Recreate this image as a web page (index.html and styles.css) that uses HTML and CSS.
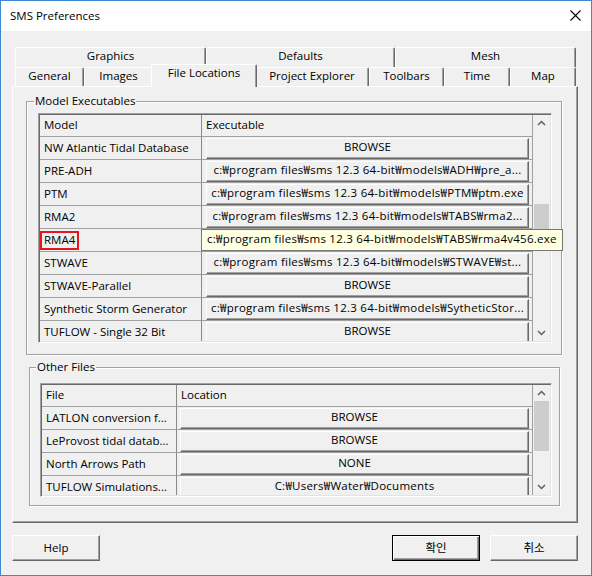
FILE: index.html
```html
<!DOCTYPE html>
<html lang="ko">
<head>
<meta charset="utf-8">
<title>SMS Preferences</title>
<link rel="stylesheet" href="styles.css">
</head>
<body>
<div class="window">
  <div class="titlebar">
    <span class="title">SMS Preferences</span>
    <svg class="close" width="11" height="11" viewBox="0 0 11 11"><path d="M0.5 0.5 L10.5 10.5 M10.5 0.5 L0.5 10.5" stroke="#000" stroke-width="1.1" fill="none"/></svg>
  </div>
  <div class="client">
    <div class="tabs">
      <div class="tabrow row1">
        <div class="tab t-graphics">Graphics</div>
        <div class="tab t-defaults">Defaults</div>
        <div class="tab t-mesh">Mesh</div>
      </div>
      <div class="tabrow row2">
        <div class="tab t-general">General</div>
        <div class="tab t-images">Images</div>
        <div class="tab t-files selected">File Locations</div>
        <div class="tab t-project">Project Explorer</div>
        <div class="tab t-toolbars">Toolbars</div>
        <div class="tab t-time">Time</div>
        <div class="tab t-map">Map</div>
      </div>
    </div>
    <div class="panel">
      <div class="group g1">
        <div class="glabel">Model Executables</div>
        <div class="table t1">
          <div class="grid">
            <div class="cell hdr c1">Model</div>
            <div class="cell hdr c2">Executable</div>

            <div class="cell c1">NW Atlantic Tidal Database</div>
            <div class="cell c2 bc"><div class="cbtn">BROWSE</div></div>

            <div class="cell c1">PRE-ADH</div>
            <div class="cell c2 bc"><div class="cbtn path">c:₩program files₩sms 12.3 64-bit₩models₩ADH₩pre_a...</div></div>

            <div class="cell c1">PTM</div>
            <div class="cell c2 bc"><div class="cbtn path">c:₩program files₩sms 12.3 64-bit₩models₩PTM₩ptm.exe</div></div>

            <div class="cell c1">RMA2</div>
            <div class="cell c2 bc"><div class="cbtn path">c:₩program files₩sms 12.3 64-bit₩models₩TABS₩rma2...</div></div>

            <div class="cell c1"><span class="hl">RMA4</span></div>
            <div class="cell c2 bc"></div>

            <div class="cell c1">STWAVE</div>
            <div class="cell c2 bc"><div class="cbtn path">c:₩program files₩sms 12.3 64-bit₩models₩STWAVE₩st...</div></div>

            <div class="cell c1">STWAVE-Parallel</div>
            <div class="cell c2 bc"><div class="cbtn">BROWSE</div></div>

            <div class="cell c1">Synthetic Storm Generator</div>
            <div class="cell c2 bc"><div class="cbtn path">c:₩program files₩sms 12.3 64-bit₩models₩SytheticStor...</div></div>

            <div class="cell c1">TUFLOW - Single 32 Bit</div>
            <div class="cell c2 bc"><div class="cbtn">BROWSE</div></div>
          </div>
          <div class="vscroll">
            <div class="arrow"><svg width="9" height="6" viewBox="0 0 9 6"><path d="M1 5 L4.5 1.5 L8 5" stroke="#606060" stroke-width="1.5" fill="none"/></svg></div>
            <div class="track"><div class="thumb thumb1"></div></div>
            <div class="arrow"><svg width="9" height="6" viewBox="0 0 9 6"><path d="M1 1 L4.5 4.5 L8 1" stroke="#606060" stroke-width="1.5" fill="none"/></svg></div>
          </div>
          <div class="tooltip path">c:₩program files₩sms 12.3 64-bit₩models₩TABS₩rma4v456.exe</div>
        </div>
      </div>

      <div class="group g2">
        <div class="glabel">Other Files</div>
        <div class="table t2">
          <div class="grid">
            <div class="cell hdr c1">File</div>
            <div class="cell hdr c2">Location</div>

            <div class="cell c1">LATLON conversion f...</div>
            <div class="cell c2 bc"><div class="cbtn">BROWSE</div></div>

            <div class="cell c1">LeProvost tidal datab...</div>
            <div class="cell c2 bc"><div class="cbtn">BROWSE</div></div>

            <div class="cell c1">North Arrows Path</div>
            <div class="cell c2 bc"><div class="cbtn">NONE</div></div>

            <div class="cell c1">TUFLOW Simulations...</div>
            <div class="cell c2 bc"><div class="cbtn path">C:₩Users₩Water₩Documents</div></div>
          </div>
          <div class="vscroll">
            <div class="arrow"><svg width="9" height="6" viewBox="0 0 9 6"><path d="M1 5 L4.5 1.5 L8 5" stroke="#606060" stroke-width="1.5" fill="none"/></svg></div>
            <div class="track"><div class="thumb thumb2"></div></div>
            <div class="arrow"><svg width="9" height="6" viewBox="0 0 9 6"><path d="M1 1 L4.5 4.5 L8 1" stroke="#606060" stroke-width="1.5" fill="none"/></svg></div>
          </div>
        </div>
      </div>
    </div>
    <div class="buttons">
      <div class="btn">Help</div>
      <div class="spacer"></div>
      <div class="btn default">확인</div>
      <div class="btn">취소</div>
    </div>
  </div>
</div>
</body>
</html>
```

FILE: styles.css
```css
* { box-sizing: border-box; }

body {
  margin: 0;
  background: #ffffff;
  font-family: "Open Sans", "Noto Sans CJK KR", sans-serif;
  font-size: 11.5px;
  color: #000;
}

.window {
  width: 592px;
  height: 576px;
  border: 1px solid #3e88d0;
  background: #f0f0f0;
  display: flex;
  flex-direction: column;
  overflow: hidden;
}

.titlebar {
  height: 30px;
  flex: none;
  background: #ffffff;
  display: flex;
  align-items: center;
  justify-content: space-between;
  padding: 0 10px 1px 9px;
}

.title { font-size: 11.5px; }

.close { display: block; }

.client {
  flex: 1;
  padding: 16px 0 0 11px;
}

/* ---------- tabs ---------- */
.tabrow {
  display: flex;
  margin-left: 3px;
}

.tab {
  background: #f0f0f0;
  border-top: 1px solid #ffffff;
  border-left: 1px solid #ffffff;
  border-right: 1px solid #696969;
  box-shadow: inset -1px 0 #a0a0a0;
  border-radius: 2px 2px 0 0;
  text-align: center;
  line-height: 16px;
  white-space: nowrap;
}

.row1 .tab { height: 20px; }
.row2 .tab { height: 19px; }

.tab.selected {
  position: relative;
  z-index: 1;
  height: 23px;
  margin: -3px -2px -1px;
}

.t-graphics { width: 191px; }
.t-defaults { width: 189px; }
.t-mesh { width: 181px; }

.t-general { width: 69px; }
.t-images { width: 69px; }
.t-files { width: 106px; }
.t-project { width: 114px; }
.t-toolbars { width: 75px; }
.t-time { width: 66px; }
.t-map { width: 66px; }

/* ---------- panel ---------- */
.panel {
  width: 566px;
  height: 437px;
  border-top: 1px solid #ffffff;
  border-left: 1px solid #ffffff;
  border-right: 1px solid #696969;
  border-bottom: 1px solid #696969;
  box-shadow: inset -1px -1px #a0a0a0;
  overflow: hidden;
}

.group {
  border: 1px solid #a0a0a0;
  box-shadow: inset 1px 1px #ffffff, 1px 1px #ffffff;
}

.g1 {
  margin: 14px 0 0 13px;
  width: 536px;
  height: 254px;
}

.g2 {
  margin: 12px 0 0 16px;
  width: 531px;
  height: 139px;
}

.glabel {
  display: table;
  background: #f0f0f0;
  line-height: 16px;
  padding: 0 1px;
  margin-top: -9px;
}

.g1 .glabel { margin-left: 7px; }
.g2 .glabel { margin-left: 6px; }

/* ---------- tables ---------- */
.table {
  position: relative;
  display: flex;
  border: 1px solid;
  border-color: #a0a0a0 #ffffff #ffffff #a0a0a0;
  box-shadow: inset 1px 1px #696969, inset -1px -1px #e3e3e3;
  padding: 1px;
  background: #f0f0f0;
}

.t1 {
  margin: 4px 0 0 11px;
  width: 514px;
  height: 230px;
}

.t2 {
  margin: 8px 0 0 10px;
  width: 512px;
  height: 114px;
}

.grid {
  display: grid;
  grid-template-rows: 22px;
  grid-auto-rows: 23px;
  align-content: start;
  overflow: hidden;
  flex: none;
}

.t1 .grid {
  grid-template-columns: 162px 331px;
  width: 493px;
  height: 226px;
}

.t2 .grid {
  grid-template-columns: 135px 356px;
  width: 491px;
  height: 110px;
}

.cell {
  border-bottom: 1px solid #a0a0a0;
  border-right: 1px solid #a0a0a0;
  display: flex;
  align-items: center;
  padding: 0 0 2px 4px;
  white-space: nowrap;
  overflow: hidden;
}

.cell.c1 { border-right-color: #8a8a8a; }

.cell.bc {
  align-items: stretch;
  padding: 1px 3px 0 4px;
}

.t2 .cell.bc { padding-left: 3px; }

.cbtn {
  flex: 1;
  min-width: 0;
  background: #f0f0f0;
  border-top: 1px solid #ffffff;
  border-left: 1px solid #ffffff;
  border-right: 1px solid #696969;
  border-bottom: 1px solid #696969;
  box-shadow: inset -1px -1px #a0a0a0;
  text-align: center;
  line-height: 16px;
  padding: 0 3px;
  white-space: nowrap;
  overflow: hidden;
}

.path { letter-spacing: 0.25px; }

.tooltip {
  position: absolute;
  left: 162px;
  top: 115px;
  width: 362px;
  height: 22px;
  z-index: 5;
  background: #ffffe1;
  border: 1px solid #767676;
  padding-left: 5px;
  line-height: 18px;
  white-space: nowrap;
}

.hl {
  display: inline-block;
  border: 2px solid #e8141e;
  padding: 0 2px 1px;
  margin: 2px 0 0 -4px;
  line-height: 14px;
}

/* ---------- scrollbars ---------- */
.vscroll {
  width: 17px;
  flex: none;
  display: flex;
  flex-direction: column;
  background: #f0f0f0;
}

.arrow {
  height: 16px;
  flex: none;
  display: flex;
  align-items: center;
  justify-content: center;
}

.track {
  flex: 1;
  padding: 0 1px;
}

.thumb { background: #cdcdcd; }
.thumb1 { margin-top: 73px; height: 43px; }
.thumb2 { margin-top: 0; height: 50px; }

/* ---------- bottom buttons ---------- */
.buttons {
  display: flex;
  width: 566px;
  margin-top: 12px;
}

.spacer { flex: 1; }

.btn {
  width: 88px;
  height: 26px;
  background: #f0f0f0;
  border-top: 1px solid #ffffff;
  border-left: 1px solid #ffffff;
  border-right: 1px solid #696969;
  border-bottom: 1px solid #696969;
  box-shadow: inset -1px -1px #a0a0a0;
  display: flex;
  align-items: center;
  justify-content: center;
  padding-bottom: 2px;
}

.btn + .btn { margin-left: 10px; }

.btn.default {
  border: 1px solid #000;
  box-shadow: inset 1px 1px #ffffff, inset -1px -1px #696969, inset -2px -2px #a0a0a0;
}
```
